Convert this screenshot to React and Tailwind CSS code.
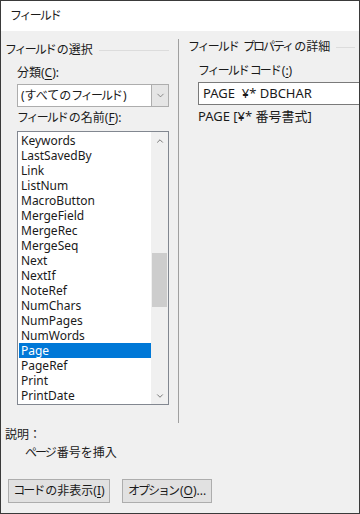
import { ChevronDown, ChevronUp } from 'lucide-react';

const fields = [
  'Keywords', 'LastSavedBy', 'Link', 'ListNum', 'MacroButton', 'MergeField', 'MergeRec',
  'MergeSeq', 'Next', 'NextIf', 'NoteRef', 'NumChars', 'NumPages', 'NumWords', 'Page',
  'PageRef', 'Print', 'PrintDate',
];

function GroupTitle({ children }) {
  return (
    <div className="flex items-center gap-[6px] h-[20px]">
      <span className="whitespace-nowrap">{children}</span>
      <div className="flex-1 h-px bg-[#dcdcdc]" />
    </div>
  );
}

function Key({ children }) {
  return <span className="underline underline-offset-2">{children}</span>;
}

// katakana is set narrow in the original UI font
function K({ children }) {
  return <span className="tracking-[-2px] mr-[2px]">{children}</span>;
}

export default function App() {
  return (
    <div
      className="w-[360px] h-[514px] border border-[#3a3a3a] bg-[#f0f0f0] flex flex-col text-[12px] text-[#1a1a1a] overflow-hidden"
      style={{ fontFamily: '"Noto Sans", "Noto Sans CJK JP", sans-serif' }}
    >
      {/* title bar */}
      <div className="h-[30px] bg-white flex items-center px-[9px] shrink-0">
        <K>フィールド</K>
      </div>

      <div className="flex pt-[8px] h-[392px]">
        {/* left column */}
        <div className="w-[177px] pl-[4px] pr-[9px] shrink-0">
          <div className="pt-[1px]">
            <GroupTitle>
              <K>フィールド</K>の選択
            </GroupTitle>
          </div>
          <div className="pl-[12px]">
            <div className="mt-[3px] h-[20px] flex items-center">
              分類(<Key>C</Key>):
            </div>
            <div className="mt-[1px] h-[23px] flex border border-[#adadad] bg-white">
              <div className="flex-1 flex items-center pl-[3px]">
                (すべての<K>フィールド</K>)
              </div>
              <div className="w-[17px] bg-[#e5e5e5] border-l border-[#adadad] flex items-center justify-center">
                <ChevronDown size={11} strokeWidth={1.5} className="text-[#606060]" />
              </div>
            </div>
            <div className="mt-[1px] h-[20px] flex items-center">
              <K>フィールド</K>の名前(<Key>F</Key>):
            </div>
            <div className="mt-[3px] h-[274px] flex border border-[#828790] bg-white">
              <div className="flex-1 pt-[1px] pl-[1px]">
                {fields.map((f) => (
                  <div
                    key={f}
                    className={`h-[15px] leading-[15px] pl-[2px] text-[12px] ${
                      f === 'Page' ? 'bg-[#0078d7] text-white' : ''
                    }`}
                  >
                    {f}
                  </div>
                ))}
              </div>
              <div className="w-[17px] bg-[#f0f0f0] flex flex-col items-center">
                <div className="h-[17px] flex items-center justify-center">
                  <ChevronUp size={10} strokeWidth={2} className="text-[#606060]" />
                </div>
                <div className="flex-1 w-full px-[1px] pt-[104px]">
                  <div className="h-[54px] bg-[#cdcdcd]" />
                </div>
                <div className="h-[17px] flex items-center justify-center">
                  <ChevronDown size={10} strokeWidth={2} className="text-[#606060]" />
                </div>
              </div>
            </div>
          </div>
        </div>

        {/* right column */}
        <div className="flex-1 border-l border-[#a0a0a0] pl-[9px] pr-[4px]">
          <div className="-mt-[2px]">
            <GroupTitle>
              <K>フィールド</K> <K>プロパティ</K>の詳細
            </GroupTitle>
          </div>
          <div className="pl-[10px]">
            <div className="mt-[4px] h-[20px] flex items-center">
              <K>フィールド</K> <K>コード</K>(<Key>:</Key>)
            </div>
            <div className="mt-[1px] h-[23px] -mr-[8px] border border-[#7a7a7a] border-r-0 bg-white flex items-center pl-[4px] whitespace-pre text-[13px]">
              PAGE  ¥* DBCHAR
            </div>
            <div className="mt-[2px] h-[20px] flex items-center text-[13px]">PAGE [¥* 番号書式]</div>
          </div>
        </div>
      </div>

      {/* description */}
      <div className="px-[4px] mt-[3px]">
        <div className="h-[18px] flex items-center">説明：</div>
        <div className="h-[18px] flex items-center pl-[20px]">
          <K>ページ</K>番号を挿入
        </div>
      </div>

      {/* buttons */}
      <div className="flex gap-[12px] pl-[7px] mt-[17px]">
        <button className="w-[102px] h-[24px] bg-[#e1e1e1] border border-[#adadad] flex items-center justify-center">
          <K>コード</K>の非表示(<Key>I</Key>)
        </button>
        <button className="w-[90px] h-[24px] bg-[#e1e1e1] border border-[#adadad] flex items-center justify-center">
          <K>オプション</K>(<Key>O</Key>)...
        </button>
      </div>
    </div>
  );
}
